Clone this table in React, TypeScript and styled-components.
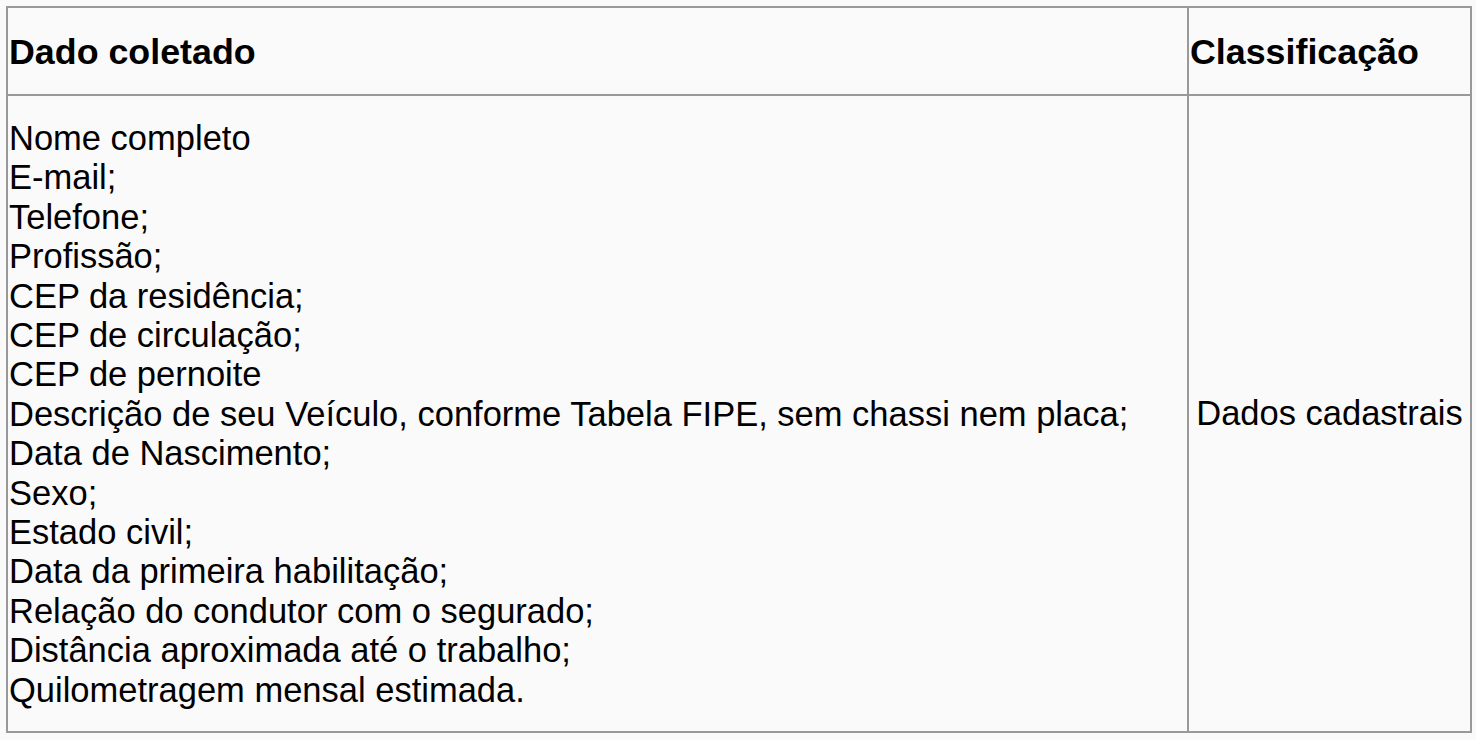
import React from "react";
import styled, { createGlobalStyle } from "styled-components";

const Global = createGlobalStyle`
  html, body { margin: 0; padding: 0; background: #fafafa; }
  body { font-family: "Liberation Sans", Arial, Helvetica, sans-serif; color: #000; }
`;

const Page = styled.div`
  padding: 6px;
`;

const Table = styled.table`
  border-collapse: collapse;
  width: 1464px;
  table-layout: fixed;
  font-size: 34.5px;
`;

const Col = styled.col<{ $w: number }>`
  width: ${(p) => p.$w}px;
`;

const HeadCell = styled.th`
  height: 84px;
  border: 2px solid #999;
  padding: 2px 1px 0;
  text-align: left;
  vertical-align: middle;
  font-weight: bold;
  font-size: 35.8px;
  line-height: 40px;
  white-space: nowrap;
`;

const ListCell = styled.td`
  border: 2px solid #999;
  padding: 23px 1px 21px;
  vertical-align: middle;
  line-height: 39.4px;
`;

const ClassCell = styled.td`
  border: 2px solid #999;
  padding: 0 1px;
  text-align: center;
  vertical-align: middle;
  line-height: 39.4px;
  white-space: nowrap;
`;

const Line = styled.div`
  white-space: nowrap;
`;

const items = [
  "Nome completo",
  "E-mail;",
  "Telefone;",
  "Profissão;",
  "CEP da residência;",
  "CEP de circulação;",
  "CEP de pernoite",
  "Descrição de seu Veículo, conforme Tabela FIPE, sem chassi nem placa;",
  "Data de Nascimento;",
  "Sexo;",
  "Estado civil;",
  "Data da primeira habilitação;",
  "Relação do condutor com o segurado;",
  "Distância aproximada até o trabalho;",
  "Quilometragem mensal estimada.",
];

export default function App() {
  return (
    <>
      <Global />
      <Page>
        <Table>
          <colgroup>
            <Col $w={1181} />
            <Col $w={283} />
          </colgroup>
          <thead>
            <tr>
              <HeadCell>Dado coletado</HeadCell>
              <HeadCell>Classificação</HeadCell>
            </tr>
          </thead>
          <tbody>
            <tr>
              <ListCell>
                {items.map((t) => (
                  <Line key={t}>{t}</Line>
                ))}
              </ListCell>
              <ClassCell>Dados cadastrais</ClassCell>
            </tr>
          </tbody>
        </Table>
      </Page>
    </>
  );
}
